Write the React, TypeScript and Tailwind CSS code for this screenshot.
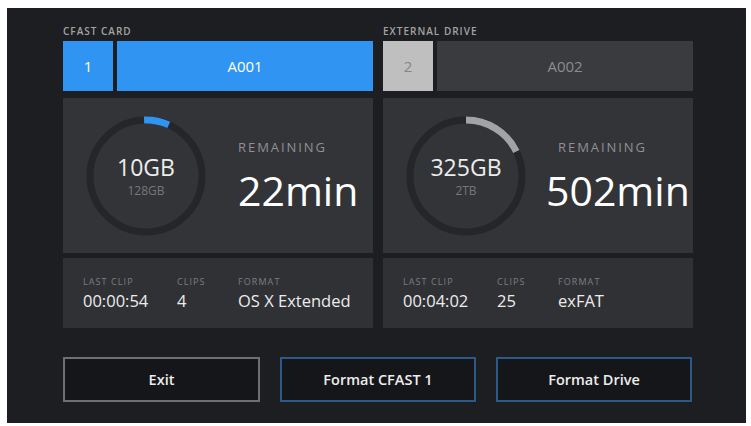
import React from 'react';

interface MediaInfo {
  label: string;
  slot: string;
  clip: string;
  active: boolean;
  used: string;
  total: string;
  remaining: string;
  arcStart: number;
  arcEnd: number;
  lastClip: string;
  clips: string;
  format: string;
  numberShift?: boolean;
}

const media: MediaInfo[] = [
  {
    label: 'CFAST CARD',
    slot: '1',
    clip: 'A001',
    active: true,
    used: '10GB',
    total: '128GB',
    remaining: '22min',
    arcStart: -2,
    arcEnd: 24,
    lastClip: '00:00:54',
    clips: '4',
    format: 'OS X Extended',
  },
  {
    label: 'EXTERNAL DRIVE',
    slot: '2',
    clip: 'A002',
    active: false,
    used: '325GB',
    total: '2TB',
    remaining: '502min',
    arcStart: 0,
    arcEnd: 64,
    lastClip: '00:04:02',
    clips: '25',
    format: 'exFAT',
    numberShift: true,
  },
];

// point on circle, 0deg = top, clockwise
const polar = (cx: number, cy: number, r: number, deg: number) => {
  const rad = ((deg - 90) * Math.PI) / 180;
  return { x: cx + r * Math.cos(rad), y: cy + r * Math.sin(rad) };
};

const Ring: React.FC<{ start: number; end: number; color: string }> = ({ start, end, color }) => {
  const c = 62;
  const r = 56;
  const a = polar(c, c, r, start);
  const b = polar(c, c, r, end);
  const large = end - start > 180 ? 1 : 0;
  return (
    <svg width="124" height="124" viewBox="0 0 124 124" className="absolute inset-0">
      <circle cx={c} cy={c} r={r} fill="none" stroke="#25262a" strokeWidth="7" />
      <path
        d={`M ${a.x} ${a.y} A ${r} ${r} 0 ${large} 1 ${b.x} ${b.y}`}
        fill="none"
        stroke={color}
        strokeWidth="7"
      />
    </svg>
  );
};

const MediaColumn: React.FC<{ m: MediaInfo }> = ({ m }) => (
  <div className="w-[310px] flex flex-col">
    {/* header label */}
    <div className="h-[12px] mb-[4px] text-[10px] leading-[12px] font-semibold tracking-[0.1em] text-[#a3a3a3]">
      {m.label}
    </div>

    {/* slot tabs */}
    <div className="flex gap-[4px] h-[50px]">
      <div
        className={`w-[50px] flex items-center justify-center text-[15px] ${
          m.active ? 'bg-[#2f94f2] text-white' : 'bg-[#bfbfc0] text-[#85868a]'
        }`}
      >
        {m.slot}
      </div>
      <div
        className={`flex-1 flex items-center justify-center text-[15px] ${
          m.active ? 'bg-[#2f94f2] text-white' : 'bg-[#3a3b3f] text-[#8b8c8f]'
        }`}
      >
        {m.clip}
      </div>
    </div>

    {/* storage card */}
    <div className="mt-[7px] h-[155px] bg-[#333438] flex items-center pl-[21px]">
      <div className="relative w-[124px] h-[124px] shrink-0">
        <Ring start={m.arcStart} end={m.arcEnd} color={m.active ? '#2f94f2' : '#a3a3a5'} />
        <div className="absolute inset-0 flex flex-col items-center justify-center">
          <div className="text-[23px] leading-[24px] text-[#ececec]">{m.used}</div>
          <div className="text-[12px] leading-[13px] text-[#76777b] mt-[5px]">{m.total}</div>
        </div>
      </div>
      <div className="ml-[30px] flex flex-col">
        <div className="text-[13px] leading-[16px] tracking-[0.15em] text-[#8f9094]">REMAINING</div>
        <div
          className={`text-[41px] leading-[46px] mt-[12px] text-white ${m.numberShift ? '-ml-[12px]' : ''}`}
        >
          {m.remaining}
        </div>
      </div>
    </div>

    {/* clip info card */}
    <div className="mt-[5px] h-[70px] bg-[#303135] flex items-center pl-[20px]">
      <div className="w-[94px]">
        <div className="text-[9px] leading-[11px] tracking-[0.12em] text-[#7c7d81]">LAST CLIP</div>
        <div className="text-[16.5px] leading-[20px] mt-[4px] text-[#ececec]">{m.lastClip}</div>
      </div>
      <div className="w-[61px]">
        <div className="text-[9px] leading-[11px] tracking-[0.12em] text-[#7c7d81]">CLIPS</div>
        <div className="text-[16.5px] leading-[20px] mt-[4px] text-[#ececec]">{m.clips}</div>
      </div>
      <div>
        <div className="text-[9px] leading-[11px] tracking-[0.12em] text-[#7c7d81]">FORMAT</div>
        <div className="text-[16.5px] leading-[20px] mt-[4px] text-[#ececec]">{m.format}</div>
      </div>
    </div>
  </div>
);

export default function App() {
  return (
    <div
      className="w-[751px] h-[426px] bg-white pt-[8px] pl-[7px]"
      style={{ fontFamily: '"Open Sans", "Noto Sans", sans-serif' }}
    >
      <div className="w-[739px] h-[415px] bg-[#1d1e21] pl-[56px] pt-[17px]">
        <div className="flex gap-[10px]">
          {media.map((m) => (
            <MediaColumn key={m.slot} m={m} />
          ))}
        </div>

        {/* actions */}
        <div className="flex gap-[20px] mt-[29px]">
          <button className="w-[197px] h-[45px] border-2 border-[#6e6f72] bg-[#151619] text-[#ededed] text-[14.5px] font-semibold">
            Exit
          </button>
          <button className="w-[196px] h-[45px] border-2 border-[#2b5a88] bg-[#151619] text-[#ededed] text-[14.5px] font-semibold">
            Format CFAST 1
          </button>
          <button className="w-[196px] h-[45px] border-2 border-[#2b5a88] bg-[#151619] text-[#ededed] text-[14.5px] font-semibold">
            Format Drive
          </button>
        </div>
      </div>
    </div>
  );
}
